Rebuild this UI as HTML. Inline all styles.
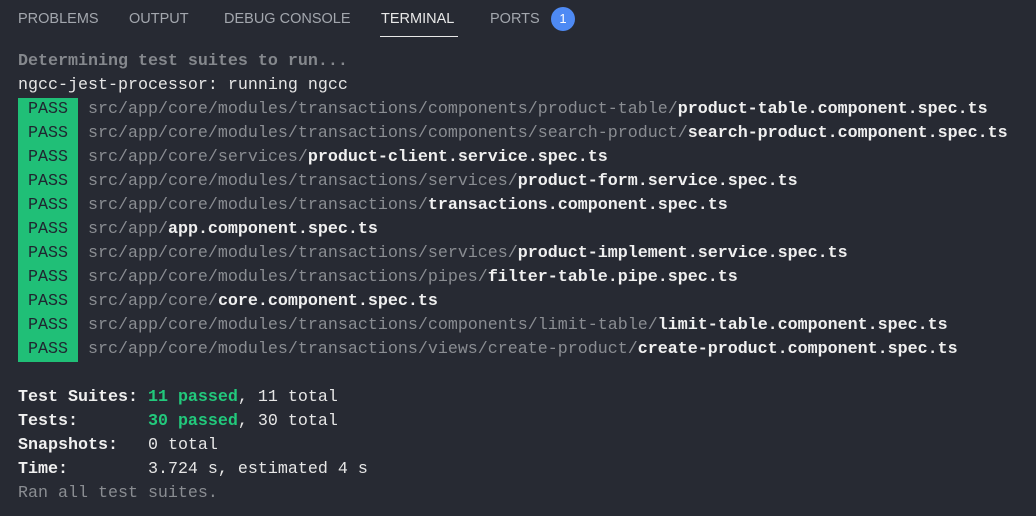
<html><head><style>
body{margin:0;width:1036px;height:516px;background:#272a33;overflow:hidden;font-family:"Liberation Sans",sans-serif}
.tabs{position:absolute;top:0;left:0;height:40px;width:1036px}
.tab{position:absolute;top:11px;font-size:14.5px;color:#a3a7ae}
.tab.a{color:#e8e8e8}
.ul{position:absolute;left:380px;top:36px;width:78px;height:1px;background:#e8e8e8}
.badge{position:absolute;left:551px;top:7px;width:24px;height:24px;border-radius:12px;background:#4e8af4;color:#fff;font-size:13px;text-align:center;line-height:24px}
.term{position:absolute;left:18px;top:50px;font-family:"Liberation Mono",monospace;font-size:16.67px;line-height:24px;color:#e6e6e6;white-space:pre}
.g{color:#8a8d92}.b{font-weight:bold;color:#f0f0f0}
.p{background:#20bf77;color:#1f2630;display:inline-block;height:24px;vertical-align:top}
.gr{color:#22c97c;font-weight:bold}
.dim{color:#85888d;font-weight:bold}
</style></head><body>
<div class="tabs">
<span class="tab" style="left:18px">PROBLEMS</span>
<span class="tab" style="left:129px">OUTPUT</span>
<span class="tab" style="left:224px">DEBUG CONSOLE</span>
<span class="tab a" style="left:381px">TERMINAL</span>
<span class="tab" style="left:490px">PORTS</span>
<div class="ul"></div><div class="badge">1</div>
</div>
<div class="term"><span class="dim">Determining test suites to run...</span>
ngcc-jest-processor: running ngcc
<span class="p"> PASS </span> <span class="g">src/app/core/modules/transactions/components/product-table/</span><span class="b">product-table.component.spec.ts</span>
<span class="p"> PASS </span> <span class="g">src/app/core/modules/transactions/components/search-product/</span><span class="b">search-product.component.spec.ts</span>
<span class="p"> PASS </span> <span class="g">src/app/core/services/</span><span class="b">product-client.service.spec.ts</span>
<span class="p"> PASS </span> <span class="g">src/app/core/modules/transactions/services/</span><span class="b">product-form.service.spec.ts</span>
<span class="p"> PASS </span> <span class="g">src/app/core/modules/transactions/</span><span class="b">transactions.component.spec.ts</span>
<span class="p"> PASS </span> <span class="g">src/app/</span><span class="b">app.component.spec.ts</span>
<span class="p"> PASS </span> <span class="g">src/app/core/modules/transactions/services/</span><span class="b">product-implement.service.spec.ts</span>
<span class="p"> PASS </span> <span class="g">src/app/core/modules/transactions/pipes/</span><span class="b">filter-table.pipe.spec.ts</span>
<span class="p"> PASS </span> <span class="g">src/app/core/</span><span class="b">core.component.spec.ts</span>
<span class="p"> PASS </span> <span class="g">src/app/core/modules/transactions/components/limit-table/</span><span class="b">limit-table.component.spec.ts</span>
<span class="p"> PASS </span> <span class="g">src/app/core/modules/transactions/views/create-product/</span><span class="b">create-product.component.spec.ts</span>

<span class="b">Test Suites: </span><span class="gr">11 passed</span>, 11 total
<span class="b">Tests:       </span><span class="gr">30 passed</span>, 30 total
<span class="b">Snapshots:   </span>0 total
<span class="b">Time:        </span>3.724 s, estimated 4 s
<span class="g">Ran all test suites.</span></div>
</body></html>
